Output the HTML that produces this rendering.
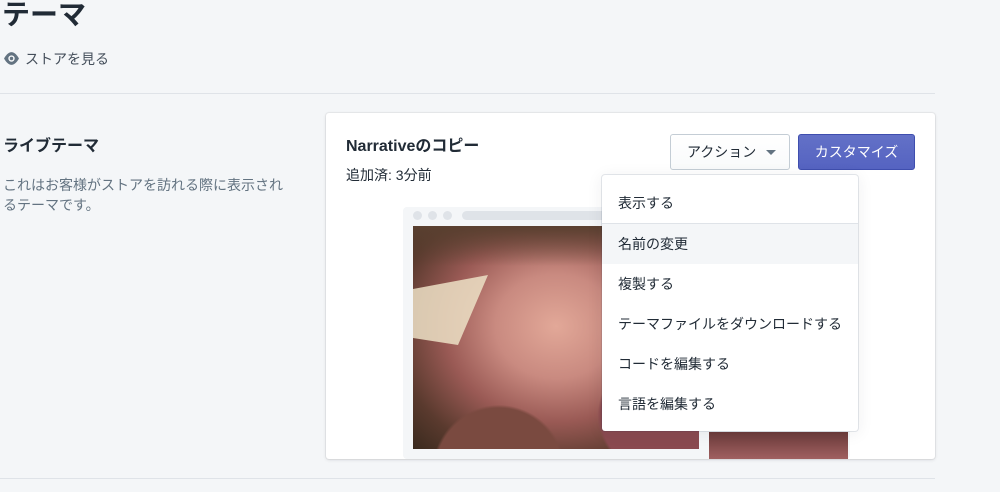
<!DOCTYPE html>
<html><head><meta charset="utf-8"><style>
*{margin:0;padding:0;box-sizing:border-box}
body{width:1000px;height:492px;background:#f4f6f8;font-family:"Liberation Sans","Noto Sans CJK JP",sans-serif;color:#212b36;position:relative;overflow:hidden}
.a{position:absolute}
</style></head><body>
<div class="a" style="left:2px;top:-3px;font-size:28px;font-weight:bold;line-height:36px">テーマ</div>
<svg class="a" style="left:3px;top:51px" width="17" height="15" viewBox="0 0 16 14"><path d="M8 1C4 1 1 7 1 7s3 6 7 6 7-6 7-6-3-6-7-6z" fill="#637381"/><circle cx="8" cy="7" r="3" fill="#f4f6f8"/><circle cx="8" cy="7" r="1.6" fill="#637381"/></svg>
<div class="a" style="left:25px;top:49px;font-size:14px;color:#454f5b">ストアを見る</div>
<div class="a" style="left:0;top:93px;width:935px;height:1px;background:#dfe3e8"></div>
<div class="a" style="left:0;top:478px;width:935px;height:1px;background:#dfe3e8"></div>
<div class="a" style="left:3px;top:132px;font-size:16px;font-weight:bold">ライブテーマ</div>
<div class="a" style="left:3px;top:175px;font-size:14px;line-height:20px;color:#637381;width:290px">これはお客様がストアを訪れる際に表示されるテーマです。</div>
<div class="a" style="left:326px;top:113px;width:609px;height:346px;background:#fff;border-radius:3px;box-shadow:0 0 0 1px rgba(63,63,68,.06),0 1px 3px rgba(63,63,68,.15)"></div>
<div class="a" style="left:346px;top:132px;font-size:16px;font-weight:bold">Narrativeのコピー</div>
<div class="a" style="left:346px;top:165px;font-size:14px">追加済: 3分前</div>
<div class="a" style="left:403px;top:207px;width:447px;height:252px;background:#f4f6f8;border-radius:4px"></div>
<div class="a" style="left:413px;top:211px;width:9px;height:9px;border-radius:50%;background:#dfe3e8"></div>
<div class="a" style="left:428px;top:211px;width:9px;height:9px;border-radius:50%;background:#dfe3e8"></div>
<div class="a" style="left:443px;top:211px;width:9px;height:9px;border-radius:50%;background:#dfe3e8"></div>
<div class="a" style="left:462px;top:211px;width:380px;height:9px;border-radius:5px;background:#dfe3e8"></div>
<div class="a" style="left:413px;top:226px;width:286px;height:223px;background:radial-gradient(circle at 30% 110%,#7a4a40 0 20%,transparent 21%),radial-gradient(circle at 85% 85%,#8a4a50 0 18%,transparent 19%),radial-gradient(ellipse at 50% 45%,#e2a898 0%,#c98a80 30%,#9a5a55 55%,#5a3a2e 80%,#3a2a1e 100%)"></div>
<div class="a" style="left:413px;top:226px;width:286px;height:40px;background:linear-gradient(#5a4030,transparent)"></div>
<div class="a" style="left:413px;top:275px;width:75px;height:70px;background:#ece0c6;opacity:.85;clip-path:polygon(0 20%,100% 0,60% 100%,0 90%)"></div>
<div class="a" style="left:709px;top:432px;width:139px;height:27px;background:linear-gradient(#6a3a3a,#a06060)"></div>
<div class="a" style="left:670px;top:134px;width:120px;height:36px;background:linear-gradient(#fff,#f9fafb);border:1px solid #c4cdd5;border-radius:3px;font-size:14px;line-height:34px;padding-left:16px;color:#212b36">アクション<span style="position:absolute;left:95px;top:15px;border:5px solid transparent;border-top-color:#637381;border-bottom:0"></span></div>
<div class="a" style="left:798px;top:134px;width:117px;height:36px;background:linear-gradient(#6371c7,#5563c1);border:1px solid #3f4eae;border-radius:3px;font-size:14px;line-height:34px;text-align:center;color:#fff">カスタマイズ</div>
<div class="a" style="left:602px;top:175px;width:256px;height:256px;background:#fff;border-radius:3px;box-shadow:0 0 0 1px rgba(6,44,82,.1),0 2px 16px rgba(33,43,54,.08)"></div>
<div class="a" style="left:602px;top:223px;width:256px;height:1px;background:#dfe3e8"></div>
<div class="a" style="left:602px;top:224px;width:256px;height:40px;background:#f4f6f8"></div>
<div class="a" style="left:618px;top:193px;font-size:14px;line-height:20px">表示する</div>
<div class="a" style="left:618px;top:234px;font-size:14px;line-height:20px">名前の変更</div>
<div class="a" style="left:618px;top:274px;font-size:14px;line-height:20px">複製する</div>
<div class="a" style="left:618px;top:314px;font-size:14px;line-height:20px">テーマファイルをダウンロードする</div>
<div class="a" style="left:618px;top:354px;font-size:14px;line-height:20px">コードを編集する</div>
<div class="a" style="left:618px;top:394px;font-size:14px;line-height:20px">言語を編集する</div>
</body></html>
